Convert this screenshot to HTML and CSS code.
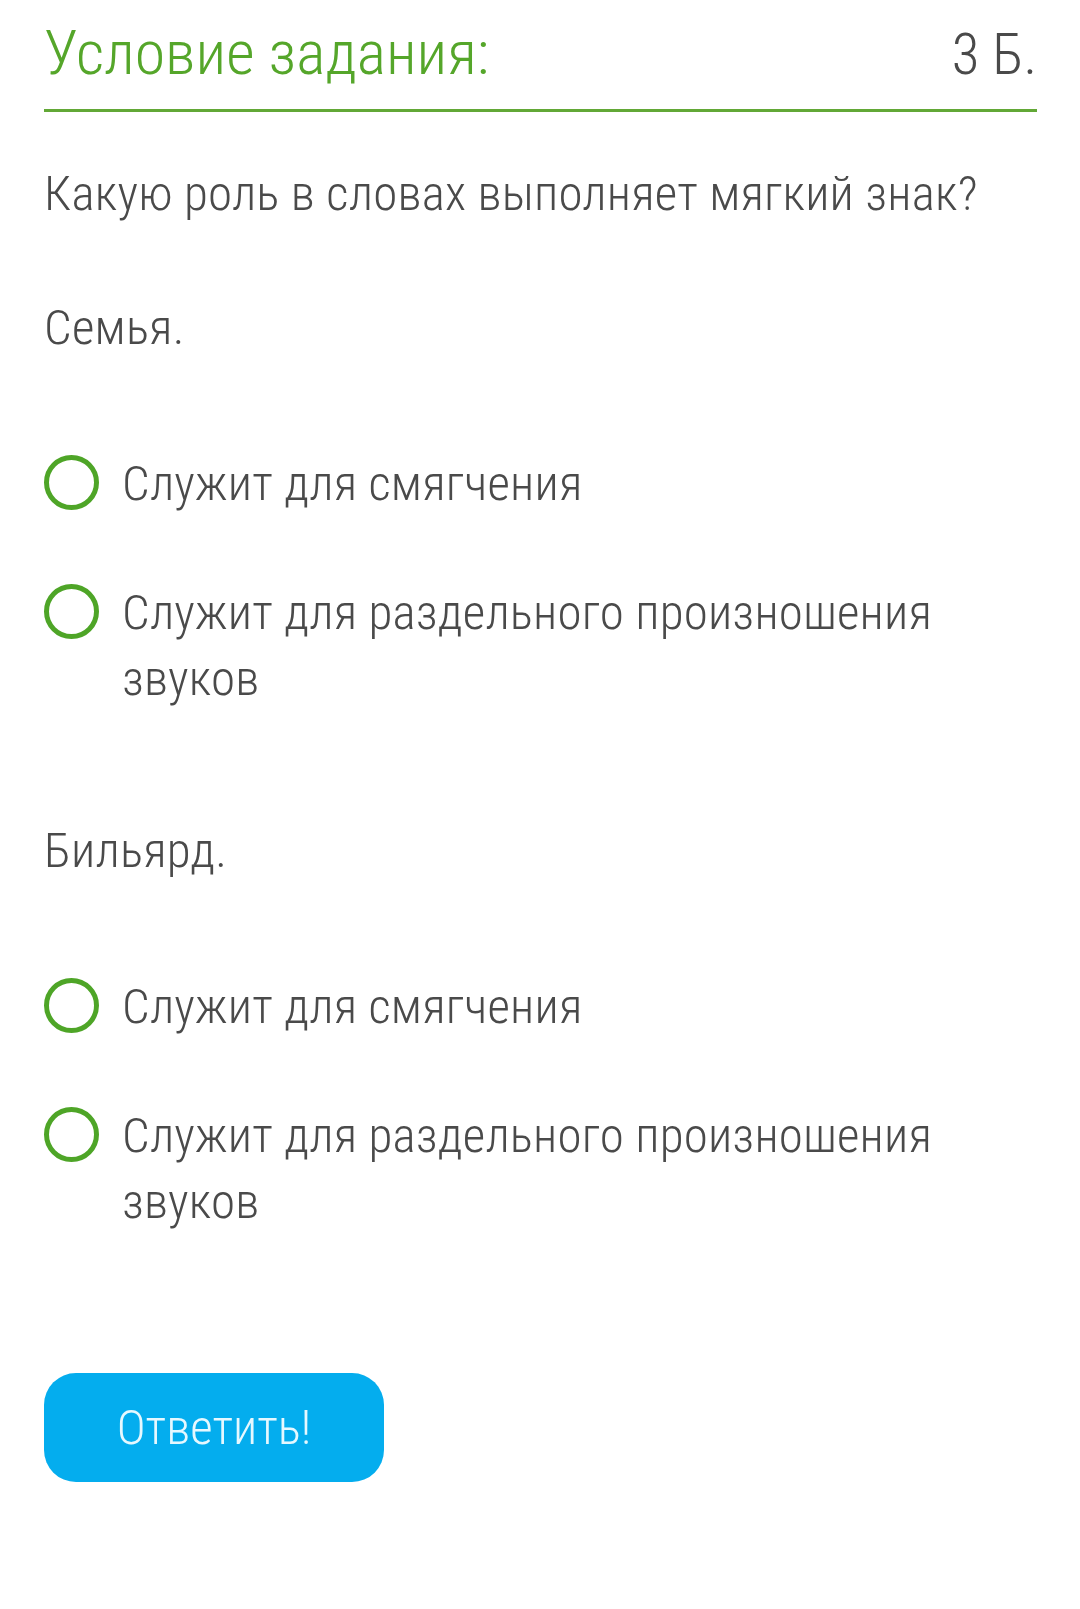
FILE: index.html
```html
<html>
<head>
<meta charset="utf-8" />
<title>Условие задания</title>
<link rel="stylesheet" href="styles.css">
</head>
<body>

<div class="task">
    <div class="task-head">
        <span class="task-title">Условие задания:</span>
        <span class="task-points">3 Б.</span>
    </div>

    <p class="question">Какую роль в словах выполняет мягкий знак?</p>

    <p class="word">Семья.</p>

    <ul class="answers">
        <li class="answer"><span class="radio"></span><span class="answer-text">Служит для смягчения</span></li>
        <li class="answer"><span class="radio"></span><span class="answer-text">Служит для раздельного произношения звуков</span></li>
    </ul>

    <p class="word">Бильярд.</p>

    <ul class="answers">
        <li class="answer"><span class="radio"></span><span class="answer-text">Служит для смягчения</span></li>
        <li class="answer"><span class="radio"></span><span class="answer-text">Служит для раздельного произношения звуков</span></li>
    </ul>

    <button class="submit" type="button">Ответить!</button>
</div>

</body>
</html>
```

FILE: styles.css
```css
body {
    background: #fff;
    margin: 0;
}

.task {
    padding: 0 43px 0 44px;
    font-family: "Roboto Condensed Light", "Roboto Condensed", Roboto, sans-serif;
    font-weight: 300;
    font-stretch: condensed;
    color: #4a4a4a;
}

.task-head {
    display: flex;
    justify-content: space-between;
    align-items: baseline;
    padding-top: 15px;
    padding-bottom: 16px;
    border-bottom: 3px solid #62a836;
    line-height: 76px;
}

.task-title {
    font-size: 62px;
    color: #55a62a;
}

.task-points {
    font-size: 57px;
    color: #4a4a4a;
}

.question,
.word,
.answer-text {
    font-size: 49px;
    letter-spacing: 0.2px;
    line-height: 66px;
    margin: 0;
}

.question {
    margin-top: 49px;
}

.word {
    margin-top: 68px;
}

.word + .answers {
    margin-top: 90px;
}

.answers {
    list-style: none;
    margin: 0 0 106px 0;
    padding: 0;
    display: flex;
    flex-direction: column;
    gap: 63px;
}

.answers:last-of-type {
    margin-bottom: 0;
}

.answer {
    display: flex;
    align-items: flex-start;
    gap: 23px;
}

.radio {
    flex: none;
    box-sizing: border-box;
    width: 55px;
    height: 55px;
    margin-top: 4px;
    border: 5px solid #4ea527;
    border-radius: 50%;
}

.submit {
    display: block;
    margin-top: 138px;
    width: 340px;
    height: 109px;
    border: none;
    border-radius: 32px;
    background: #04adee;
    color: #e6f8ff;
    font-family: "Roboto Condensed Light", "Roboto Condensed", Roboto, sans-serif;
    font-weight: 300;
    font-stretch: condensed;
    font-size: 49px;
    padding: 0;
}
```
